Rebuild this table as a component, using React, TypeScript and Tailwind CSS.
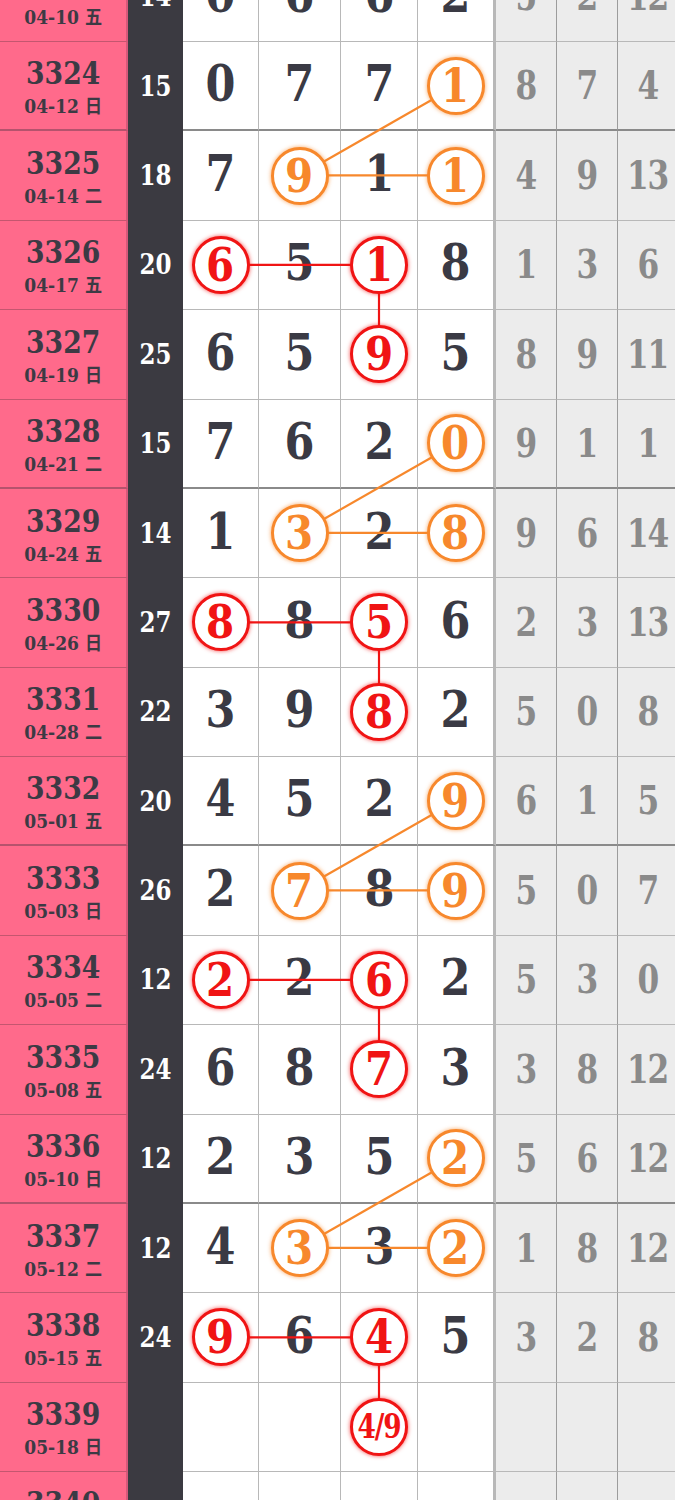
import React from "react"

type Row = {
  no: number
  date: string
  sum: string
  cells: string[]
  gray: string[]
}

const H = 89.375

const rows: Row[] = [
  { no: 3323, date: "04-10 五", sum: "14", cells: ["0", "6", "6", "2"], gray: ["5", "2", "12"] },
  { no: 3324, date: "04-12 日", sum: "15", cells: ["0", "7", "7", "o1"], gray: ["8", "7", "4"] },
  { no: 3325, date: "04-14 二", sum: "18", cells: ["7", "o9", "1", "o1"], gray: ["4", "9", "13"] },
  { no: 3326, date: "04-17 五", sum: "20", cells: ["r6", "5", "r1", "8"], gray: ["1", "3", "6"] },
  { no: 3327, date: "04-19 日", sum: "25", cells: ["6", "5", "r9", "5"], gray: ["8", "9", "11"] },
  { no: 3328, date: "04-21 二", sum: "15", cells: ["7", "6", "2", "o0"], gray: ["9", "1", "1"] },
  { no: 3329, date: "04-24 五", sum: "14", cells: ["1", "o3", "2", "o8"], gray: ["9", "6", "14"] },
  { no: 3330, date: "04-26 日", sum: "27", cells: ["r8", "8", "r5", "6"], gray: ["2", "3", "13"] },
  { no: 3331, date: "04-28 二", sum: "22", cells: ["3", "9", "r8", "2"], gray: ["5", "0", "8"] },
  { no: 3332, date: "05-01 五", sum: "20", cells: ["4", "5", "2", "o9"], gray: ["6", "1", "5"] },
  { no: 3333, date: "05-03 日", sum: "26", cells: ["2", "o7", "8", "o9"], gray: ["5", "0", "7"] },
  { no: 3334, date: "05-05 二", sum: "12", cells: ["r2", "2", "r6", "2"], gray: ["5", "3", "0"] },
  { no: 3335, date: "05-08 五", sum: "24", cells: ["6", "8", "r7", "3"], gray: ["3", "8", "12"] },
  { no: 3336, date: "05-10 日", sum: "12", cells: ["2", "3", "5", "o2"], gray: ["5", "6", "12"] },
  { no: 3337, date: "05-12 二", sum: "12", cells: ["4", "o3", "3", "o2"], gray: ["1", "8", "12"] },
  { no: 3338, date: "05-15 五", sum: "24", cells: ["r9", "6", "r4", "5"], gray: ["3", "2", "8"] },
  { no: 3339, date: "05-18 日", sum: "", cells: ["", "", "r4/9", ""], gray: ["", "", ""] },
  { no: 3340, date: "05-20 二", sum: "", cells: ["", "", "", ""], gray: ["", "", ""] },
]

const colX = [220.5, 299.5, 379, 456]

const whiteW = ["w-[76px]", "w-[82px]", "w-[77px]", "w-[78px] border-r-[3px] border-r-[#8a8a8a]"]

function Ball({ v }: { v: string }) {
  const orange = v[0] === "o"
  const text = v.slice(1)
  return (
    <div
      className={`relative z-10 w-[58px] h-[58px] rounded-full bg-white border-[3px] flex items-center justify-center ${
        orange
          ? "border-[#f7882c] text-[#f7882c] shadow-[0_0_4px_rgba(247,136,44,0.75)]"
          : "border-[#f01414] text-[#f01414] shadow-[0_0_4px_rgba(240,20,20,0.75)]"
      }`}
    >
      {text.length > 1 ? (
        <span className="inline-block text-[33px] leading-none scale-x-[0.8] tracking-[-0.04em]">{text}</span>
      ) : (
        <span className="inline-block text-[46px] leading-none scale-x-[0.88]">{text}</span>
      )}
    </div>
  )
}

function Lines() {
  const segs: { a: [number, number]; b: [number, number]; c: string }[] = []
  rows.forEach((r, i) => {
    if (r.no === 3324 || r.no === 3328 || r.no === 3332 || r.no === 3336) {
      segs.push({ a: [i, 3], b: [i + 1, 1], c: "#f7882c" })
      segs.push({ a: [i + 1, 1], b: [i + 1, 3], c: "#f7882c" })
    }
    if (r.no === 3326 || r.no === 3330 || r.no === 3334 || r.no === 3338) {
      segs.push({ a: [i, 0], b: [i, 2], c: "#f01414" })
      segs.push({ a: [i, 2], b: [i + 1, 2], c: "#f01414" })
    }
  })
  const y = (i: number) => i * H + H / 2 - 1
  return (
    <svg
      className="absolute left-0 top-0 z-[5] pointer-events-none"
      width={675}
      height={rows.length * H}
    >
      {segs.map((s, k) => (
        <line
          key={k}
          x1={colX[s.a[1]]}
          y1={y(s.a[0])}
          x2={colX[s.b[1]]}
          y2={y(s.b[0])}
          stroke={s.c}
          strokeWidth={2.2}
        />
      ))}
    </svg>
  )
}

export default function App() {
  return (
    <div className="w-[675px] h-[1500px] overflow-hidden bg-white font-['DejaVu_Serif','Noto_Sans_CJK_SC',serif] font-bold">
      <div className="relative mt-[-47.375px]">
        {rows.map((r) => {
          const thick = r.no % 4 === 0
          const line = thick
            ? "border-b-2 border-b-[#8a8a8a]"
            : "border-b border-b-[#b8b8b8]"
          return (
            <div key={r.no} className="flex h-[89.375px]">

              <div
                className={`w-[128px] shrink-0 bg-[#ff6a8b] border-r-2 border-r-[#d6587a] flex flex-col items-center justify-center text-[#3c3a44] ${
                  thick ? "border-b-2 border-b-[#b5536d]" : "border-b border-b-[#c4566f]"
                }`}
              >
                <div className="text-[31px] leading-[34px] scale-x-[0.86] pt-[2px]">{r.no}</div>
                <div className="text-[19px] leading-[22px] scale-x-[0.9] mt-[5px]">{r.date}</div>
              </div>

              <div className="w-[55px] shrink-0 bg-[#3b3a41] text-white flex items-center justify-center">
                <span className="inline-block text-[28px] scale-x-[0.82]">{r.sum}</span>
              </div>

              {r.cells.map((c, j) => (
                <div
                  key={j}
                  className={`${whiteW[j]} shrink-0 border-r border-r-[#b8b8b8] ${line} flex items-center justify-center text-[#3a3a44]`}
                >
                  {c && (c[0] === "o" || c[0] === "r") ? (
                    <Ball v={c} />
                  ) : (
                    <span className="inline-block text-[50px] leading-none -mt-[3px] scale-x-[0.86]">{c}</span>
                  )}
                </div>
              ))}

              {r.gray.map((g, j) => (
                <div
                  key={j}
                  className={`w-[61px] shrink-0 bg-[#ececec] border-r border-r-[#9c9c9c] ${line} flex items-center justify-center text-[#8a8a8a]`}
                >
                  <span className="inline-block text-[39px] leading-none scale-x-[0.8] tracking-[-0.04em]">{g}</span>
                </div>
              ))}

            </div>
          )
        })}
        <Lines />
      </div>
    </div>
  )
}
